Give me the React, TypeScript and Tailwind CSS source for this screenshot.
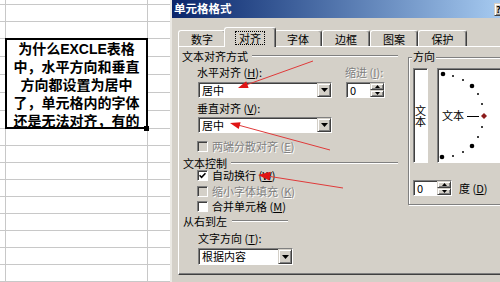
import React from "react";

const sheetRows = [
  "h-[5px]",
  "h-[17px]",
  "h-[17px]",
  "h-[18px]",
  "h-[18px]",
  "h-[18px]",
  "h-[18px]",
  "h-[18px]",
  "h-[17px]",
  "h-[17px]",
  "h-[17px]",
  "h-[17px]",
  "h-[17px]",
  "h-[17px]",
  "h-[17px]",
  "h-[17px]",
  "h-[17px]",
];

const boxLines = [
  "为什么EXCLE表格",
  "中，水平方向和垂直",
  "方向都设置为居中",
  "了，单元格内的字体",
  "还是无法对齐，有的",
];

const sunken =
  "border border-t-[#808080] border-l-[#808080] border-r-white border-b-white shadow-[inset_1px_1px_0_#404040]";
const raised =
  "border border-t-[#d4d0c8] border-l-[#d4d0c8] border-r-[#404040] border-b-[#404040] bg-[#d4d0c8] shadow-[inset_1px_1px_0_#fff,inset_-1px_-1px_0_#808080]";
const grayText = "text-[#808080] [text-shadow:1px_1px_0_#fff]";

function Sheet() {
  return (
    <div className="relative w-[170px] shrink-0">
      {sheetRows.map((h, i) => (
        <div key={i} className={`flex border-b border-[#c8c8c8] ${h}`}>
          <div className="w-[6px] border-r border-[#c8c8c8]" />
          <div className="w-[142px] border-r border-[#c8c8c8]" />
          <div className="flex-1" />
        </div>
      ))}
      {/* floating text box */}
      <div className="absolute left-[5px] top-[38px] flex h-[91px] w-[143px] flex-col items-center border-2 border-black bg-white font-['Liberation_Sans','Noto_Sans_CJK_SC',sans-serif] text-[14px] font-bold leading-[18px]">
        {boxLines.map((l) => (
          <div key={l} className="whitespace-nowrap">
            {l}
          </div>
        ))}
      </div>
      <div className="absolute left-[144px] top-[126px] h-[5px] w-[5px] bg-black" />
    </div>
  );
}

function DropBtn() {
  return (
    <span className={`flex w-[14px] items-center justify-center ${raised}`}>
      <svg width="7" height="4" viewBox="0 0 7 4">
        <path d="M0 0h7L3.5 4z" fill="#000" />
      </svg>
    </span>
  );
}

function Combo({ value, size }: { value: string; size: string }) {
  return (
    <div className={`flex bg-white ${sunken} ${size}`}>
      <span className="flex-1 pl-[3px] leading-[14px]">{value}</span>
      <DropBtn />
    </div>
  );
}

function Spin({ value }: { value: string }) {
  return (
    <div className={`flex h-[16px] w-[39px] bg-white ${sunken}`}>
      <span className="flex-1 pl-[3px] leading-[14px]">{value}</span>
      <span className="flex w-[14px] flex-col">
        <span className={`flex flex-1 items-center justify-center ${raised}`}>
          <svg width="5" height="3" viewBox="0 0 5 3">
            <path d="M0 3h5L2.5 0z" fill="#000" />
          </svg>
        </span>
        <span className={`flex flex-1 items-center justify-center ${raised}`}>
          <svg width="5" height="3" viewBox="0 0 5 3">
            <path d="M0 0h5L2.5 3z" fill="#000" />
          </svg>
        </span>
      </span>
    </div>
  );
}

function Check({ checked, disabled }: { checked?: boolean; disabled?: boolean }) {
  return (
    <span
      className={`flex h-[11px] w-[11px] shrink-0 items-center justify-center ${sunken} ${
        disabled ? "bg-[#d4d0c8]" : "bg-white"
      }`}
    >
      {checked && (
        <svg width="7" height="7" viewBox="0 0 7 7">
          <path d="M0.5 3.2L2.6 5.3L6.5 1.2" fill="none" stroke="#000" strokeWidth="1.6" />
        </svg>
      )}
    </span>
  );
}

function Etched({ className }: { className: string }) {
  return <span className={`h-[2px] border-t border-t-[#808080] border-b border-b-white ${className}`} />;
}

function Tab({ label, size, active }: { label: string; size: string; active?: boolean }) {
  return (
    <div
      className={`flex items-center justify-center rounded-t-[3px] border-l border-t border-white border-r border-r-[#404040] bg-[#d4d0c8] shadow-[inset_-1px_0_0_#808080] ${size} ${
        active ? "relative z-10 -mx-[2px] -mb-[1px] h-[20px]" : "h-[16px]"
      }`}
    >
      {active ? (
        <span className="border border-dotted border-black px-[3px] leading-[12px]">{label}</span>
      ) : (
        <span className="leading-[12px]">{label}</span>
      )}
    </div>
  );
}

function Orientation() {
  const big = [
    [6, 6],
    [35, 18],
    [35, 78],
    [5, 89],
  ];
  const small = [
    [16, 8],
    [26, 12],
    [41, 26],
    [45, 36],
    [45, 59],
    [41, 69],
    [26, 84],
    [16, 88],
  ];
  return (
    <div className={`relative h-[95px] w-[80px] shrink-0 bg-white ${sunken}`}>
      <svg width="78" height="93" viewBox="1 1 78 93" className="absolute left-0 top-0">
        {big.map(([x, y]) => (
          <circle key={`b${x}-${y}`} cx={x} cy={y} r="2.3" fill="#000" />
        ))}
        {small.map(([x, y]) => (
          <circle key={`s${x}-${y}`} cx={x} cy={y} r="1" fill="#000" />
        ))}
        <text x="5" y="52" fontSize="11" fontFamily="Noto Sans CJK SC, sans-serif" fill="#000">
          文本
        </text>
        <line x1="30" y1="48.5" x2="42" y2="48.5" stroke="#000" strokeWidth="1" />
        <path d="M47 45L50 48L47 51L44 48z" fill="#8b1a1a" />
      </svg>
    </div>
  );
}

function Dialog() {
  return (
    <div className="flex h-full w-[330px] shrink-0 flex-col overflow-hidden border-l-2 border-l-[#ebe9e4] bg-[#d4d0c8] text-[11px] leading-[12px]">
      <div className="flex h-[18px] shrink-0 items-center bg-linear-to-r from-[#0a246a] to-[#a6caf0] pl-[2px]">
        <span className="text-[11.5px] font-bold leading-none text-white">单元格格式</span>
        <span className={`ml-auto mr-[-10px] flex h-[13px] w-[16px] items-center pl-[1px] text-[9px] font-bold leading-none ${raised}`}>
          ?
        </span>
      </div>

      <div className="flex h-[28px] shrink-0 items-end pl-[6px]">
        <Tab label="数字" size="w-[48px]" />
        <Tab label="对齐" size="w-[52px]" active />
        <Tab label="字体" size="w-[48px]" />
        <Tab label="边框" size="w-[48px]" />
        <Tab label="图案" size="w-[48px]" />
        <Tab label="保护" size="w-[49px]" />
      </div>

      <div className="ml-[6px] mr-[-20px] flex flex-1 border-l border-t border-white border-b border-b-[#404040] shadow-[inset_0_-1px_0_#808080]">
        <div className="flex w-[229px] shrink-0 flex-col pl-[3px]">
          <div className="mt-[1px] flex h-[16px] items-center">
            <span>文本对齐方式</span>
            <Etched className="ml-[4px] mr-[10px] flex-1" />
          </div>
          <div className="flex h-[16px] items-center pl-[15px]">
            <span className="w-[148px]">
              水平对齐 (<u>H</u>):
            </span>
            <span className={grayText}>
              缩进 (<u>I</u>):
            </span>
          </div>
          <div className="mt-[2px] flex pl-[16px]">
            <Combo value="居中" size="h-[16px] w-[134px]" />
            <div className="ml-[14px]">
              <Spin value="0" />
            </div>
          </div>
          <div className="mt-[2px] flex h-[16px] items-center pl-[15px]">
            <span>
              垂直对齐 (<u>V</u>):
            </span>
          </div>
          <div className="mt-[1px] flex pl-[16px]">
            <Combo value="居中" size="h-[16px] w-[134px]" />
          </div>
          <div className="mt-[6px] flex h-[14px] items-center gap-[4px] pl-[15px]">
            <Check disabled />
            <span className={grayText}>
              两端分散对齐 (<u>E</u>)
            </span>
          </div>
          <div className="mt-[4px] flex h-[12px] items-center pl-[1px]">
            <span>文本控制</span>
            <Etched className="ml-[4px] mr-[10px] flex-1" />
          </div>
          <div className="flex h-[12px] items-center gap-[4px] pl-[15px]">
            <Check checked />
            <span>
              自动换行 (<u>W</u>)
            </span>
          </div>
          <div className="mt-[4px] flex h-[12px] items-center gap-[4px] pl-[15px]">
            <Check disabled />
            <span className={grayText}>
              缩小字体填充 (<u>K</u>)
            </span>
          </div>
          <div className="mt-[3px] flex h-[12px] items-center gap-[4px] pl-[15px]">
            <Check />
            <span>
              合并单元格 (<u>M</u>)
            </span>
          </div>
          <div className="mt-[3px] flex h-[12px] items-center pl-[1px]">
            <span>从右到左</span>
            <Etched className="ml-[5px] w-[56px]" />
          </div>
          <div className="mt-[5px] flex h-[12px] items-center pl-[16px]">
            <span>
              文字方向 (<u>T</u>):
            </span>
          </div>
          <div className="mt-[4px] flex pl-[16px]">
            <Combo value="根据内容" size="h-[17px] w-[95px]" />
          </div>
        </div>

        <div className="flex-1">
          <div className="relative mt-[10px] h-[148px] w-[110px] border border-[#808080] shadow-[inset_1px_1px_0_#fff,1px_1px_0_#fff]">
            <span className="absolute left-[3px] -top-[8px] bg-[#d4d0c8] px-[1px] leading-[12px]">方向</span>
            <div className="flex flex-col pl-[4px] pt-[10px]">
              <div className="flex gap-[9px]">
                <div className={`flex h-[95px] w-[20px] items-center justify-center bg-white ${sunken}`}>
                  <span className="leading-[12px] [writing-mode:vertical-rl]">文本</span>
                </div>
                <Orientation />
              </div>
              <div className="mt-[17px] flex items-center">
                <Spin value="0" />
                <span className="ml-[7px]">
                  度 (<u>D</u>)
                </span>
              </div>
            </div>
          </div>
        </div>
      </div>
      <div className="h-[7px] shrink-0" />
    </div>
  );
}

function Arrows() {
  return (
    <svg width="500" height="282" className="pointer-events-none absolute left-0 top-0">
      <line x1="313" y1="61" x2="246" y2="85" stroke="#e03a3a" strokeWidth="1" />
      <path d="M238 88L248.6 87.9L246.2 81.3z" fill="#e01515" />
      <line x1="330" y1="150" x2="238" y2="125" stroke="#e03a3a" strokeWidth="1" />
      <path d="M230 123L238.7 129L240.6 122.2z" fill="#e01515" />
      <line x1="343" y1="188" x2="267" y2="176" stroke="#e03a3a" strokeWidth="1" />
      <path d="M258 175L269.5 180.5L270.5 171.8z" fill="#e01515" />
    </svg>
  );
}

export default function App() {
  return (
    <div className="relative flex h-[282px] w-[500px] overflow-hidden bg-white font-['Noto_Sans_CJK_SC','Noto_Sans',sans-serif] text-black">
      <Sheet />
      <Dialog />
      <Arrows />
    </div>
  );
}
